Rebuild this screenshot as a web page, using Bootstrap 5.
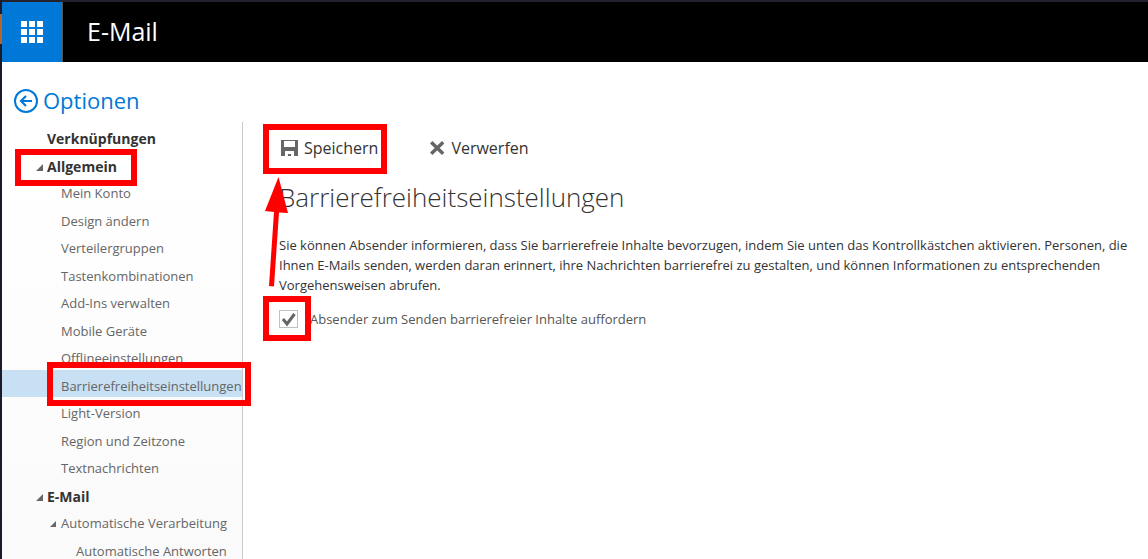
<!DOCTYPE html>
<html lang="de">
<head>
<meta charset="utf-8">
<meta name="viewport" content="width=device-width, initial-scale=1">
<title>E-Mail – Optionen</title>
<link href="https://cdn.jsdelivr.net/npm/bootstrap@5.3.0/dist/css/bootstrap.min.css" rel="stylesheet">
<style>
body{font-family:"Open Sans","Noto Sans",sans-serif;font-size:13px;line-height:20px;color:#333;background:#fff}
.app{border-left:2px solid #1b1a26;border-image:linear-gradient(#1b1a26 14px,#b5652b 14px 44px,#1b1a26 44px) 0 0 0 2;position:relative}
.topbar{height:62px;border-top:2px solid #23222e;background:#000;color:#fff}
.launcher{width:61px;background:#0078d7;border:0;border-right:1px solid #555}
.brand-name{font-size:25px;line-height:30px;padding:0 0 2px 24px}
.side{width:241px}
.back-link{height:60px;padding:18px 0 0 11px;color:#0078d7;font-size:22px;line-height:38px}
.back-link span{padding-bottom:2px}
.tree{border-right:1px solid #c8c8c8;background:linear-gradient(#fff 10%,#fafafa)}
.tree li{height:27px;padding-left:59px}
.tree li:nth-child(odd){height:28px}
.tree a{color:#666;line-height:27px;padding-top:3px;display:block;white-space:nowrap;text-decoration:none;position:relative}
.tree .top-item{padding-left:45px}
.tree .top-item a{color:#333;font-size:14px;font-weight:700}
.tree .deep-item{padding-left:74px}
.tree .current{background:#c7e0f4}
.tree .arrow{position:absolute;left:-11px;top:14px}
.mainpane{padding:72px 20px 0 36px}
.tool{border:0;background:none;padding:0 0 0 2px;gap:6px;font-size:16px;line-height:28px;color:#333}
.toolbar-row{gap:50px}
.page-title{font-size:26px;font-weight:300;line-height:38px;margin:16px 0 19px;color:#333}
.intro{margin-bottom:14px}
.notify input{appearance:none;width:19px;height:18px;margin:0 12px 0 0;border:1px solid #c0c0c0;background:#fff url("data:image/svg+xml,%3Csvg xmlns='http://www.w3.org/2000/svg' viewBox='0 0 17 16'%3E%3Cpath d='M3 8l4 5 7.500-10' fill='none' stroke='%23666' stroke-width='3'/%3E%3C/svg%3E") center/100% no-repeat}
.notify label{color:#555}
.marker{position:absolute;border:6px solid red;pointer-events:none}
.pointer{position:absolute;left:260px;top:176px;pointer-events:none}
</style>
</head>
<body>
<div class="app vh-100 d-flex flex-column overflow-hidden">
  <header class="topbar d-flex flex-shrink-0 align-items-stretch">
    <button class="launcher p-0 d-flex align-items-center justify-content-center" aria-label="App-Startfeld">
      <svg width="22" height="22" fill="#fff"><path d="M0 0h6v6H0zM8 0h6v6H8zM16 0h6v6h-6zM0 8h6v6H0zM8 8h6v6H8zM16 8h6v6h-6zM0 16h6v6H0zM8 16h6v6H8zM16 16h6v6h-6z"/></svg>
    </button>
    <div class="brand-name align-self-center">E-Mail</div>
  </header>
  <div class="d-flex flex-grow-1">
    <aside class="side flex-shrink-0 d-flex flex-column">
      <a href="#" class="back-link d-flex align-items-center text-decoration-none gap-1">
        <svg width="26" height="26" viewBox="0 0 26 26" fill="none" stroke="#0078d7"><circle cx="13" cy="13" r="11" stroke-width="2"/><path d="M19 13H8M13 8l-5 5 5 5" stroke-width="2.200"/></svg>
        <span>Optionen</span>
      </a>
      <nav class="tree flex-grow-1" aria-label="Optionen">
        <ul class="list-unstyled m-0">
          <li class="top-item"><a href="#">Verknüpfungen</a></li>
          <li class="top-item"><a href="#"><svg class="arrow" width="7" height="7"><path d="M7 0v7H0z" fill="#666"/></svg>Allgemein</a></li>
          <li><a href="#">Mein Konto</a></li>
          <li><a href="#">Design ändern</a></li>
          <li><a href="#">Verteilergruppen</a></li>
          <li><a href="#">Tastenkombinationen</a></li>
          <li><a href="#">Add-Ins verwalten</a></li>
          <li><a href="#">Mobile Geräte</a></li>
          <li><a href="#">Offlineeinstellungen</a></li>
          <li class="current"><a href="#" aria-current="page">Barrierefreiheitseinstellungen</a></li>
          <li><a href="#">Light-Version</a></li>
          <li><a href="#">Region und Zeitzone</a></li>
          <li><a href="#">Textnachrichten</a></li>
          <li class="top-item"><a href="#"><svg class="arrow" width="7" height="7"><path d="M7 0v7H0z" fill="#666"/></svg>E-Mail</a></li>
          <li><a href="#"><svg class="arrow" width="6" height="6"><path d="M6 0v6H0z" fill="#666"/></svg>Automatische Verarbeitung</a></li>
          <li class="deep-item"><a href="#">Automatische Antworten</a></li>
        </ul>
      </nav>
    </aside>
    <main class="mainpane flex-grow-1">
      <div class="toolbar-row d-flex">
        <button class="tool d-flex align-items-center"><svg width="17" height="16" viewBox="0 0 17 16"><path fill="#666" fill-rule="evenodd" d="M0 0h17v16H0zM3 1v6h11V1zM4 11v5h3v-2h3v2h3v-5z"/></svg><span>Speichern</span></button>
        <button class="tool d-flex align-items-center"><svg width="15" height="14" viewBox="0 0 15 14"><path d="M1.200 1.200l12 11.600M13.200 1.200L1.200 12.800" stroke="#666" stroke-width="3.400"/></svg><span>Verwerfen</span></button>
      </div>
      <h1 class="page-title">Barrierefreiheitseinstellungen</h1>
      <p class="intro">Sie können Absender informieren, dass Sie barrierefreie Inhalte bevorzugen, indem Sie unten das Kontrollkästchen aktivieren. Personen, die Ihnen E-Mails senden, werden daran erinnert, ihre Nachrichten barrierefrei zu gestalten, und können Informationen zu entsprechenden Vorgehensweisen abrufen.</p>
      <div class="notify d-flex align-items-center"><input type="checkbox" id="notify" checked><label for="notify">Absender zum Senden barrierefreier Inhalte auffordern</label></div>
    </main>
  </div>
  <span class="marker" style="left:13px;top:149px;width:122px;height:37px"></span>
  <span class="marker" style="left:45px;top:362px;width:204px;height:44px"></span>
  <span class="marker" style="left:261px;top:124px;width:124px;height:50px"></span>
  <span class="marker" style="left:261px;top:296px;width:48px;height:45px"></span>
  <svg class="pointer" width="30" height="112" viewBox="0 0 30 112"><path d="M16.500 1L26 37 17 36.500 12 110.500 7 110 12 36 3 35z" fill="red"/></svg>
</div>
<script src="https://cdn.jsdelivr.net/npm/bootstrap@5.3.0/dist/js/bootstrap.bundle.min.js"></script>
</body>
</html>
